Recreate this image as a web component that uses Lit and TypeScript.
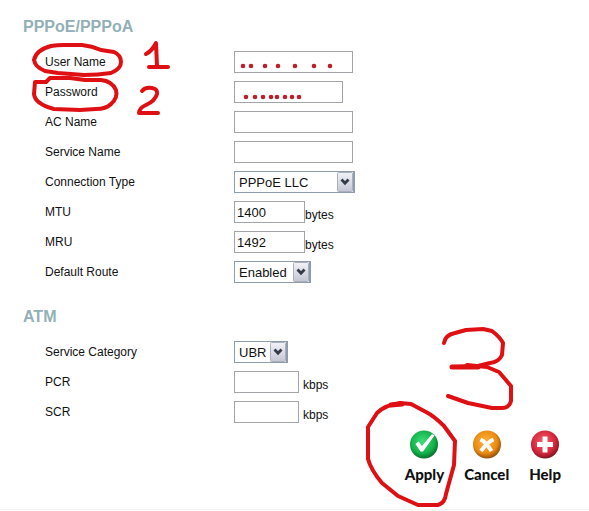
import { LitElement, html, svg, css } from "lit";
import { customElement, property } from "lit/decorators.js";

interface Field {
  id: string;
  label: string;
  kind: "text" | "password" | "select";
  size: string;
  value?: string;
  options?: string[];
  unit?: string;
  spaced?: boolean;
}

const PPP_FIELDS: Field[] = [
  { id: "user", label: "User Name", kind: "text", size: "wide" },
  { id: "password", label: "Password", kind: "password", size: "medium" },
  { id: "ac", label: "AC Name", kind: "text", size: "wide" },
  { id: "service", label: "Service Name", kind: "text", size: "wide" },
  { id: "connection", label: "Connection Type", kind: "select", size: "sel-wide", options: ["PPPoE LLC", "PPPoE VC-Mux", "PPPoA LLC", "PPPoA VC-Mux"] },
  { id: "mtu", label: "MTU", kind: "text", size: "number", value: "1400", unit: "bytes" },
  { id: "mru", label: "MRU", kind: "text", size: "number", value: "1492", unit: "bytes" },
  { id: "route", label: "Default Route", kind: "select", size: "sel-medium", options: ["Enabled", "Disabled"] },
];

const ATM_FIELDS: Field[] = [
  { id: "category", label: "Service Category", kind: "select", size: "sel-small", options: ["UBR", "CBR", "VBR"] },
  { id: "pcr", label: "PCR", kind: "text", size: "rate", unit: "kbps", spaced: true },
  { id: "scr", label: "SCR", kind: "text", size: "rate", unit: "kbps", spaced: true },
];

@customElement("form-section")
class FormSection extends LitElement {
  @property() heading = "";
  @property({ attribute: false }) fields: Field[] = [];

  static styles = css`
    :host { display: block; }
    h2 {
      margin: 0 0 10px;
      padding-left: 23px;
      font-size: 16px;
      line-height: 20px;
      font-weight: bold;
      color: #92b0b6;
    }
    .row {
      display: grid;
      grid-template-columns: 189px 1fr;
      align-items: center;
      height: 30px;
      padding-left: 45px;
    }
    .label, .unit { font-size: 12px; line-height: 14px; color: #111; }
    .control { display: flex; align-items: center; }
    .unit { padding-top: 6px; }
    .unit.spaced { padding-left: 4px; }
    input, select {
      box-sizing: border-box;
      width: 100%;
      height: 22px;
      margin: 0;
      border: 1px solid #a2a5a8;
      border-radius: 0;
      background: #fff;
      color: #111;
      font: 13px "Liberation Sans", Arial, sans-serif;
    }
    input { padding: 0 2px; }
    select { appearance: none; padding: 0 20px 0 4px; border-color: #8e9cab; border-right-width: 2px; }
    .box { display: grid; }
    .box > * { grid-area: 1 / 1; }
    .arrow { justify-self: end; align-self: center; margin-right: 2px; pointer-events: none; }
    .wide { width: 119px; }
    .medium { width: 109px; }
    .number { width: 71px; }
    .rate { width: 65px; }
    .sel-wide { width: 121px; }
    .sel-medium { width: 77px; }
    .sel-small { width: 54px; }
  `;

  private control(f: Field) {
    if (f.kind !== "select") {
      return html`<input id=${f.id} type=${f.kind} autocomplete="off" .value=${f.value ?? ""} />`;
    }
    return html`
      <select id=${f.id}>${f.options!.map((o) => html`<option>${o}</option>`)}</select>
      <svg class="arrow" width="16" height="20" viewBox="0 0 16 20" aria-hidden="true">
        <defs>
          <linearGradient id="face" x1="0" y1="0" x2="0" y2="1">
            <stop offset="0" stop-color="#f2f3f8" />
            <stop offset="1" stop-color="#c3c6d3" />
          </linearGradient>
        </defs>
        <rect x="0.5" y="0.5" width="15" height="19" rx="1" fill="url(#face)" stroke="#aab0bd" />
        <path d="M4.500 7.500 8 11.200l3.500-3.700" fill="none" stroke="#333a48" stroke-width="2.800" />
      </svg>`;
  }

  render() {
    return html`
      <h2>${this.heading}</h2>
      ${this.fields.map((f) => html`
        <div class="row">
          <label class="label" for=${f.id}>${f.label}</label>
          <div class="control">
            <div class="box ${f.size}">${this.control(f)}</div>
            ${f.unit ? html`<span class="unit ${f.spaced ? "spaced" : ""}">${f.unit}</span>` : ""}
          </div>
        </div>`)}
    `;
  }
}

const ACTIONS = [
  { name: "Apply", light: "#3fe07a", mid: "#12b14a", dark: "#08702c", mark: svg`<path d="M6.500 14 9.500 11.500l3.500 4.500L23 4 25.500 5.500 14 21.500h-2.500z" fill="#fff" />` },
  { name: "Cancel", light: "#ffb63f", mid: "#ea8a12", dark: "#94500a", mark: svg`<path d="M8.500 9.500c4 2 7.500 6 11 11.500M21.500 9.500c-5 2-8.500 6-12.500 11.500" fill="none" stroke="#fff" stroke-width="4" />` },
  { name: "Help", light: "#f5626e", mid: "#d5263a", dark: "#851321", mark: svg`<path d="M12.500 6.500h5v5.500h5.500v5h-5.500v5.500h-5v-5.500h-5.500v-5h5.500z" fill="#fff" />` },
];

@customElement("app-root")
class AppRoot extends LitElement {
  static styles = css`
    :host {
      display: block;
      background: #fff;
      font-family: "Liberation Sans", Arial, sans-serif;
    }
    main { position: relative; padding-top: 17px; border-bottom: 1px solid #f5f5f5; }
    .forms { display: grid; gap: 20px; }
    .actions {
      position: relative;
      display: flex;
      justify-content: flex-end;
      gap: 20px;
      padding: 3px 28px 26px 0;
    }
    button {
      display: grid;
      justify-items: center;
      margin: 0;
      padding: 0;
      border: 0;
      background: none;
      color: #111;
      font: 900 15px/18px Lato, "Open Sans", sans-serif;
      row-gap: 5px;
    }
    .marks { position: absolute; fill: none; stroke: #de1014; stroke-width: 4; stroke-linecap: round; stroke-linejoin: round; pointer-events: none; }
    .left { left: 0; top: 0; }
    .right { right: 0; top: -102px; }
    .dots { fill: #b9202c; stroke: none; }
  `;

  render() {
    const userDots = [243, 251, 265, 278, 295, 314, 330];
    const passwordDots = [246, 255, 263, 271, 277, 285, 292, 299];
    return html`
      <main>
        <div class="forms">
          <form-section heading="PPPoE/PPPoA" .fields=${PPP_FIELDS}></form-section>
          <form-section heading="ATM" .fields=${ATM_FIELDS}></form-section>
        </div>
        <svg class="marks left" width="360" height="130" viewBox="0 0 360 130" aria-hidden="true">
          <path d="M51 46Q57 45 64 45L82 45Q92 46 101 50L114 52Q121 55 121 62 121 69 111 73 98 75 84 75L58 73 45 71Q35 67 34 60 36 50 51 46Z" />
          <path d="M35 82 46 82 50 78 70 78 85 80 101 80Q112 81 116 90 118 98 111 104 106 109 96 109L80 110 54 109Q35 104 34 94Z" />
          <path d="M146 54Q152 51 156 43L157 66M149 67 168 67" />
          <path d="M142 91Q145 87 152 88 158 89 157 94 155 101 146 105 139 108 139 113L158 113" />
          <g class="dots">
            ${userDots.map((x) => svg`<circle cx=${x} cy="66" r="2.300" />`)}
            ${passwordDots.map((x) => svg`<circle cx=${x} cy="97" r="2.300" />`)}
          </g>
        </svg>
        <div class="actions">
          ${ACTIONS.map((a) => html`
            <button type="button">
              <svg width="30" height="30" viewBox="0 0 30 30" aria-hidden="true">
                <defs>
                  <radialGradient id=${a.name} cx="0.45" cy="0.4" r="0.6">
                    <stop offset="0" stop-color=${a.light} />
                    <stop offset="0.7" stop-color=${a.mid} />
                    <stop offset="1" stop-color=${a.dark} />
                  </radialGradient>
                </defs>
                <circle cx="15" cy="14.5" r="14" fill="url(#${a.name})" />
                ${a.mark}
              </svg>
              <span>${a.name}</span>
            </button>`)}
          <svg class="marks right" width="234" height="186" viewBox="355 325 234 186" aria-hidden="true">
            <path d="M444 343Q445 335 455 333L466 330 483 329 492 331Q500 337 503 343L502 355Q499 362 490 363L478 366 452 367M467 365 487 367 499 372 511 386 511 401Q509 408 502 408L492 408 468 403 448 396" />
            <path d="M400 403Q385 405 377 413L368 427 368 459Q371 470 382 483L398 496 418 505 438 505Q445 503 446 494L449 483 454 465 455 441 444 426Q434 416 426 412L411 404Z" />
            <path d="M391 405 402 404M452 367 478 367" stroke-width="5" />
          </svg>
        </div>
      </main>
    `;
  }
}
